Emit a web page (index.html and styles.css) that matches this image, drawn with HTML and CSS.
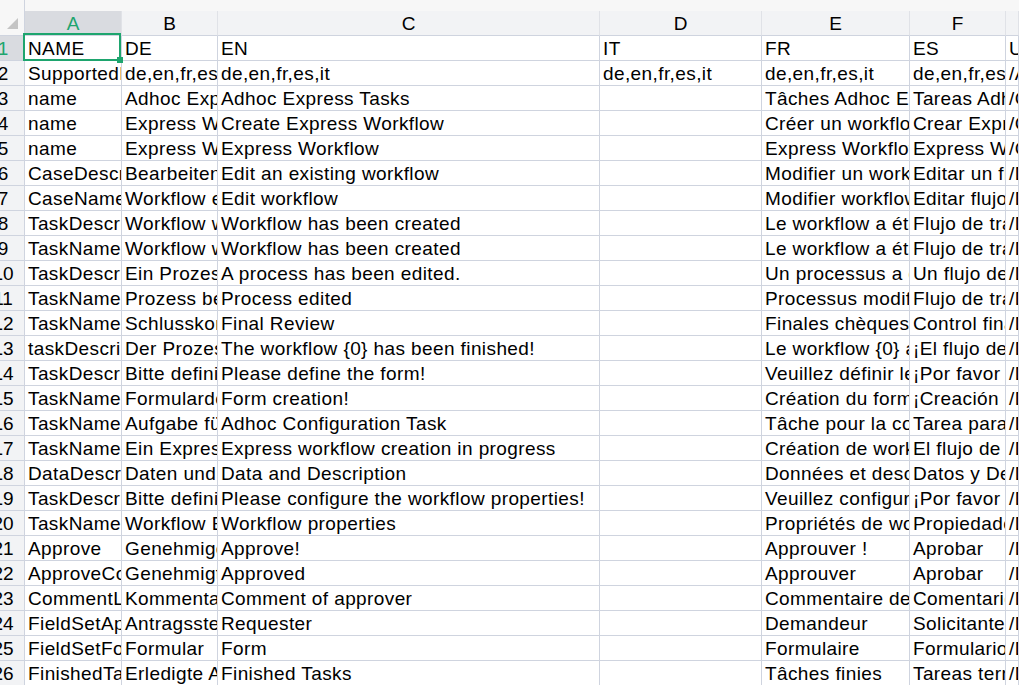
FILE: index.html
```html
<!DOCTYPE html>
<html lang="en">
<head>
<meta charset="utf-8">
<title>Sheet</title>
<link rel="stylesheet" href="styles.css">
</head>
<body>
<div class="sheet">
  <div class="strip"></div>
  <div class="row heads">
    <div class="corner"><span class="tri"></span></div>
    <div class="ch sel">A</div>
    <div class="ch">B</div>
    <div class="ch">C</div>
    <div class="ch">D</div>
    <div class="ch">E</div>
    <div class="ch">F</div>
    <div class="ch"></div>
  </div>

  <div class="row"><div class="rh sel"><span>1</span></div><div class="c active">NAME<span class="selbox"><span class="handle"></span></span></div><div class="c">DE</div><div class="c">EN</div><div class="c">IT</div><div class="c">FR</div><div class="c">ES</div><div class="c">URL</div></div>
  <div class="row"><div class="rh"><span>2</span></div><div class="c">SupportedLanguages</div><div class="c">de,en,fr,es,it</div><div class="c">de,en,fr,es,it</div><div class="c">de,en,fr,es,it</div><div class="c">de,en,fr,es,it</div><div class="c">de,en,fr,es,it</div><div class="c">/AdhocWF</div></div>
  <div class="row"><div class="rh"><span>3</span></div><div class="c">name</div><div class="c">Adhoc Express Tasks</div><div class="c">Adhoc Express Tasks</div><div class="c"></div><div class="c">Tâches Adhoc Express</div><div class="c">Tareas Adhoc Express</div><div class="c">/Categories</div></div>
  <div class="row"><div class="rh"><span>4</span></div><div class="c">name</div><div class="c">Express Workflow erstellen</div><div class="c">Create Express Workflow</div><div class="c"></div><div class="c">Créer un workflow Express</div><div class="c">Crear Express Workflow</div><div class="c">/Categories</div></div>
  <div class="row"><div class="rh"><span>5</span></div><div class="c">name</div><div class="c">Express Workflow</div><div class="c">Express Workflow</div><div class="c"></div><div class="c">Express Workflow</div><div class="c">Express Workflow</div><div class="c">/Categories</div></div>
  <div class="row"><div class="rh"><span>6</span></div><div class="c">CaseDescription</div><div class="c">Bearbeiten eines Workflows</div><div class="c">Edit an existing workflow</div><div class="c"></div><div class="c">Modifier un workflow existant</div><div class="c">Editar un flujo de trabajo</div><div class="c">/Dialogs</div></div>
  <div class="row"><div class="rh"><span>7</span></div><div class="c">CaseName</div><div class="c">Workflow editieren</div><div class="c">Edit workflow</div><div class="c"></div><div class="c">Modifier workflow</div><div class="c">Editar flujo</div><div class="c">/Dialogs</div></div>
  <div class="row"><div class="rh"><span>8</span></div><div class="c">TaskDescription</div><div class="c">Workflow wurde erstellt</div><div class="c">Workflow has been created</div><div class="c"></div><div class="c">Le workflow a été créé</div><div class="c">Flujo de trabajo creado</div><div class="c">/Dialogs</div></div>
  <div class="row"><div class="rh"><span>9</span></div><div class="c">TaskName</div><div class="c">Workflow wurde erstellt</div><div class="c">Workflow has been created</div><div class="c"></div><div class="c">Le workflow a été créé</div><div class="c">Flujo de trabajo creado</div><div class="c">/Dialogs</div></div>
  <div class="row"><div class="rh"><span>10</span></div><div class="c">TaskDescription</div><div class="c">Ein Prozess wurde bearbeitet.</div><div class="c">A process has been edited.</div><div class="c"></div><div class="c">Un processus a été modifié.</div><div class="c">Un flujo de trabajo editado.</div><div class="c">/Dialogs</div></div>
  <div class="row"><div class="rh"><span>11</span></div><div class="c">TaskName</div><div class="c">Prozess bearbeitet</div><div class="c">Process edited</div><div class="c"></div><div class="c">Processus modifié</div><div class="c">Flujo de trabajo editado</div><div class="c">/Dialogs</div></div>
  <div class="row"><div class="rh"><span>12</span></div><div class="c">TaskName</div><div class="c">Schlusskontrolle</div><div class="c">Final Review</div><div class="c"></div><div class="c">Finales chèques</div><div class="c">Control final</div><div class="c">/Dialogs</div></div>
  <div class="row"><div class="rh"><span>13</span></div><div class="c">taskDescription</div><div class="c">Der Prozess {0} wurde beendet!</div><div class="c">The workflow {0} has been finished!</div><div class="c"></div><div class="c">Le workflow {0} a été terminé !</div><div class="c">¡El flujo de trabajo {0} ha terminado!</div><div class="c">/Dialogs</div></div>
  <div class="row"><div class="rh"><span>14</span></div><div class="c">TaskDescription</div><div class="c">Bitte definieren Sie das Formular!</div><div class="c">Please define the form!</div><div class="c"></div><div class="c">Veuillez définir le formulaire !</div><div class="c">¡Por favor defina el formulario!</div><div class="c">/Dialogs</div></div>
  <div class="row"><div class="rh"><span>15</span></div><div class="c">TaskName</div><div class="c">Formulardefinition</div><div class="c">Form creation!</div><div class="c"></div><div class="c">Création du formulaire !</div><div class="c">¡Creación del formulario!</div><div class="c">/Dialogs</div></div>
  <div class="row"><div class="rh"><span>16</span></div><div class="c">TaskName</div><div class="c">Aufgabe für die Konfiguration</div><div class="c">Adhoc Configuration Task</div><div class="c"></div><div class="c">Tâche pour la configuration</div><div class="c">Tarea para la configuración</div><div class="c">/Dialogs</div></div>
  <div class="row"><div class="rh"><span>17</span></div><div class="c">TaskName</div><div class="c">Ein Express Workflow wird erstellt</div><div class="c">Express workflow creation in progress</div><div class="c"></div><div class="c">Création de workflow en cours</div><div class="c">El flujo de trabajo en curso</div><div class="c">/Dialogs</div></div>
  <div class="row"><div class="rh"><span>18</span></div><div class="c">DataDescription</div><div class="c">Daten und Beschreibung</div><div class="c">Data and Description</div><div class="c"></div><div class="c">Données et description</div><div class="c">Datos y Descripción</div><div class="c">/Dialogs</div></div>
  <div class="row"><div class="rh"><span>19</span></div><div class="c">TaskDescription</div><div class="c">Bitte definieren Sie die Eigenschaften!</div><div class="c">Please configure the workflow properties!</div><div class="c"></div><div class="c">Veuillez configurer les propriétés !</div><div class="c">¡Por favor configure las propiedades!</div><div class="c">/Dialogs</div></div>
  <div class="row"><div class="rh"><span>20</span></div><div class="c">TaskName</div><div class="c">Workflow Eigenschaften</div><div class="c">Workflow properties</div><div class="c"></div><div class="c">Propriétés de workflow</div><div class="c">Propiedades del flujo</div><div class="c">/Dialogs</div></div>
  <div class="row"><div class="rh"><span>21</span></div><div class="c">Approve</div><div class="c">Genehmigen!</div><div class="c">Approve!</div><div class="c"></div><div class="c">Approuver !</div><div class="c">Aprobar</div><div class="c">/Dialogs</div></div>
  <div class="row"><div class="rh"><span>22</span></div><div class="c">ApproveComment</div><div class="c">Genehmigt</div><div class="c">Approved</div><div class="c"></div><div class="c">Approuver</div><div class="c">Aprobar</div><div class="c">/Dialogs</div></div>
  <div class="row"><div class="rh"><span>23</span></div><div class="c">CommentLabel</div><div class="c">Kommentar des Genehmigers</div><div class="c">Comment of approver</div><div class="c"></div><div class="c">Commentaire de l'approbateur</div><div class="c">Comentario del aprobador</div><div class="c">/Dialogs</div></div>
  <div class="row"><div class="rh"><span>24</span></div><div class="c">FieldSetApplicant</div><div class="c">Antragssteller</div><div class="c">Requester</div><div class="c"></div><div class="c">Demandeur</div><div class="c">Solicitante</div><div class="c">/Dialogs</div></div>
  <div class="row"><div class="rh"><span>25</span></div><div class="c">FieldSetForm</div><div class="c">Formular</div><div class="c">Form</div><div class="c"></div><div class="c">Formulaire</div><div class="c">Formulario</div><div class="c">/Dialogs</div></div>
  <div class="row"><div class="rh"><span>26</span></div><div class="c">FinishedTasks</div><div class="c">Erledigte Aufgaben</div><div class="c">Finished Tasks</div><div class="c"></div><div class="c">Tâches finies</div><div class="c">Tareas terminadas</div><div class="c">/Dialogs</div></div>
</div>
</body>
</html>
```

FILE: styles.css
```css
html, body {
  margin: 0;
  padding: 0;
  background: #ffffff;
  overflow: hidden;
}

.sheet {
  width: 1019px;
  height: 685px;
  overflow: hidden;
  font-family: "Liberation Sans", Arial, sans-serif;
  font-size: 19px;
  letter-spacing: 0.4px;
  color: #000000;
}

.strip {
  height: 11px;
  background: #f7f7f7;
}

.row {
  display: grid;
  grid-template-columns: 25px 97px 96px 382px 162px 148px 96px 1fr;
  height: 25px;
}

.heads {
  margin-top: -11px;
  padding-top: 11px;
  height: 36px;
  box-sizing: border-box;
  background: #f7f7f7;
}

.corner {
  position: relative;
  margin-top: -11px;
  background: #f7f7f7;
  border-right: 1px solid #cfd4df;
  border-bottom: 1px solid #cfd4df;
}

.tri {
  position: absolute;
  left: 7px;
  top: 18px;
  width: 0;
  height: 0;
  border-left: 11px solid transparent;
  border-bottom: 11px solid #c4c4c4;
}

.ch {
  background: #f2f3f5;
  border-right: 1px solid #e0e2e7;
  border-bottom: 1px solid #cfd4df;
  text-align: center;
  padding-top: 2px;
  line-height: 22px;
  letter-spacing: 0;
  box-sizing: border-box;
}

.ch.sel {
  background: #d9dbe0;
  color: #1ea56e;
}

.rh {
  background: #f2f3f5;
  border-right: 1px solid #cfd4df;
  border-bottom: 1px solid #cfd4df;
  overflow: hidden;
  padding-top: 2px;
  line-height: 22px;
  letter-spacing: 0;
}

.rh span {
  display: block;
  width: 42px;
  margin-left: -18px;
  text-align: center;
}

.rh.sel {
  background: #d9dbe0;
  color: #1ea56e;
}

.c {
  border-right: 1px solid #cfd4df;
  border-bottom: 1px solid #cfd4df;
  padding: 2px 0 0 3px;
  white-space: nowrap;
  overflow: hidden;
  line-height: 22px;
}

.c.active {
  position: relative;
  overflow: visible;
}

.selbox {
  position: absolute;
  left: -2px;
  top: -3px;
  width: 98px;
  height: 28px;
  border: 2px solid #1ea56e;
  box-sizing: border-box;
}

.handle {
  position: absolute;
  right: -4px;
  bottom: -4px;
  width: 6px;
  height: 6px;
  background: #1ea56e;
}
```
